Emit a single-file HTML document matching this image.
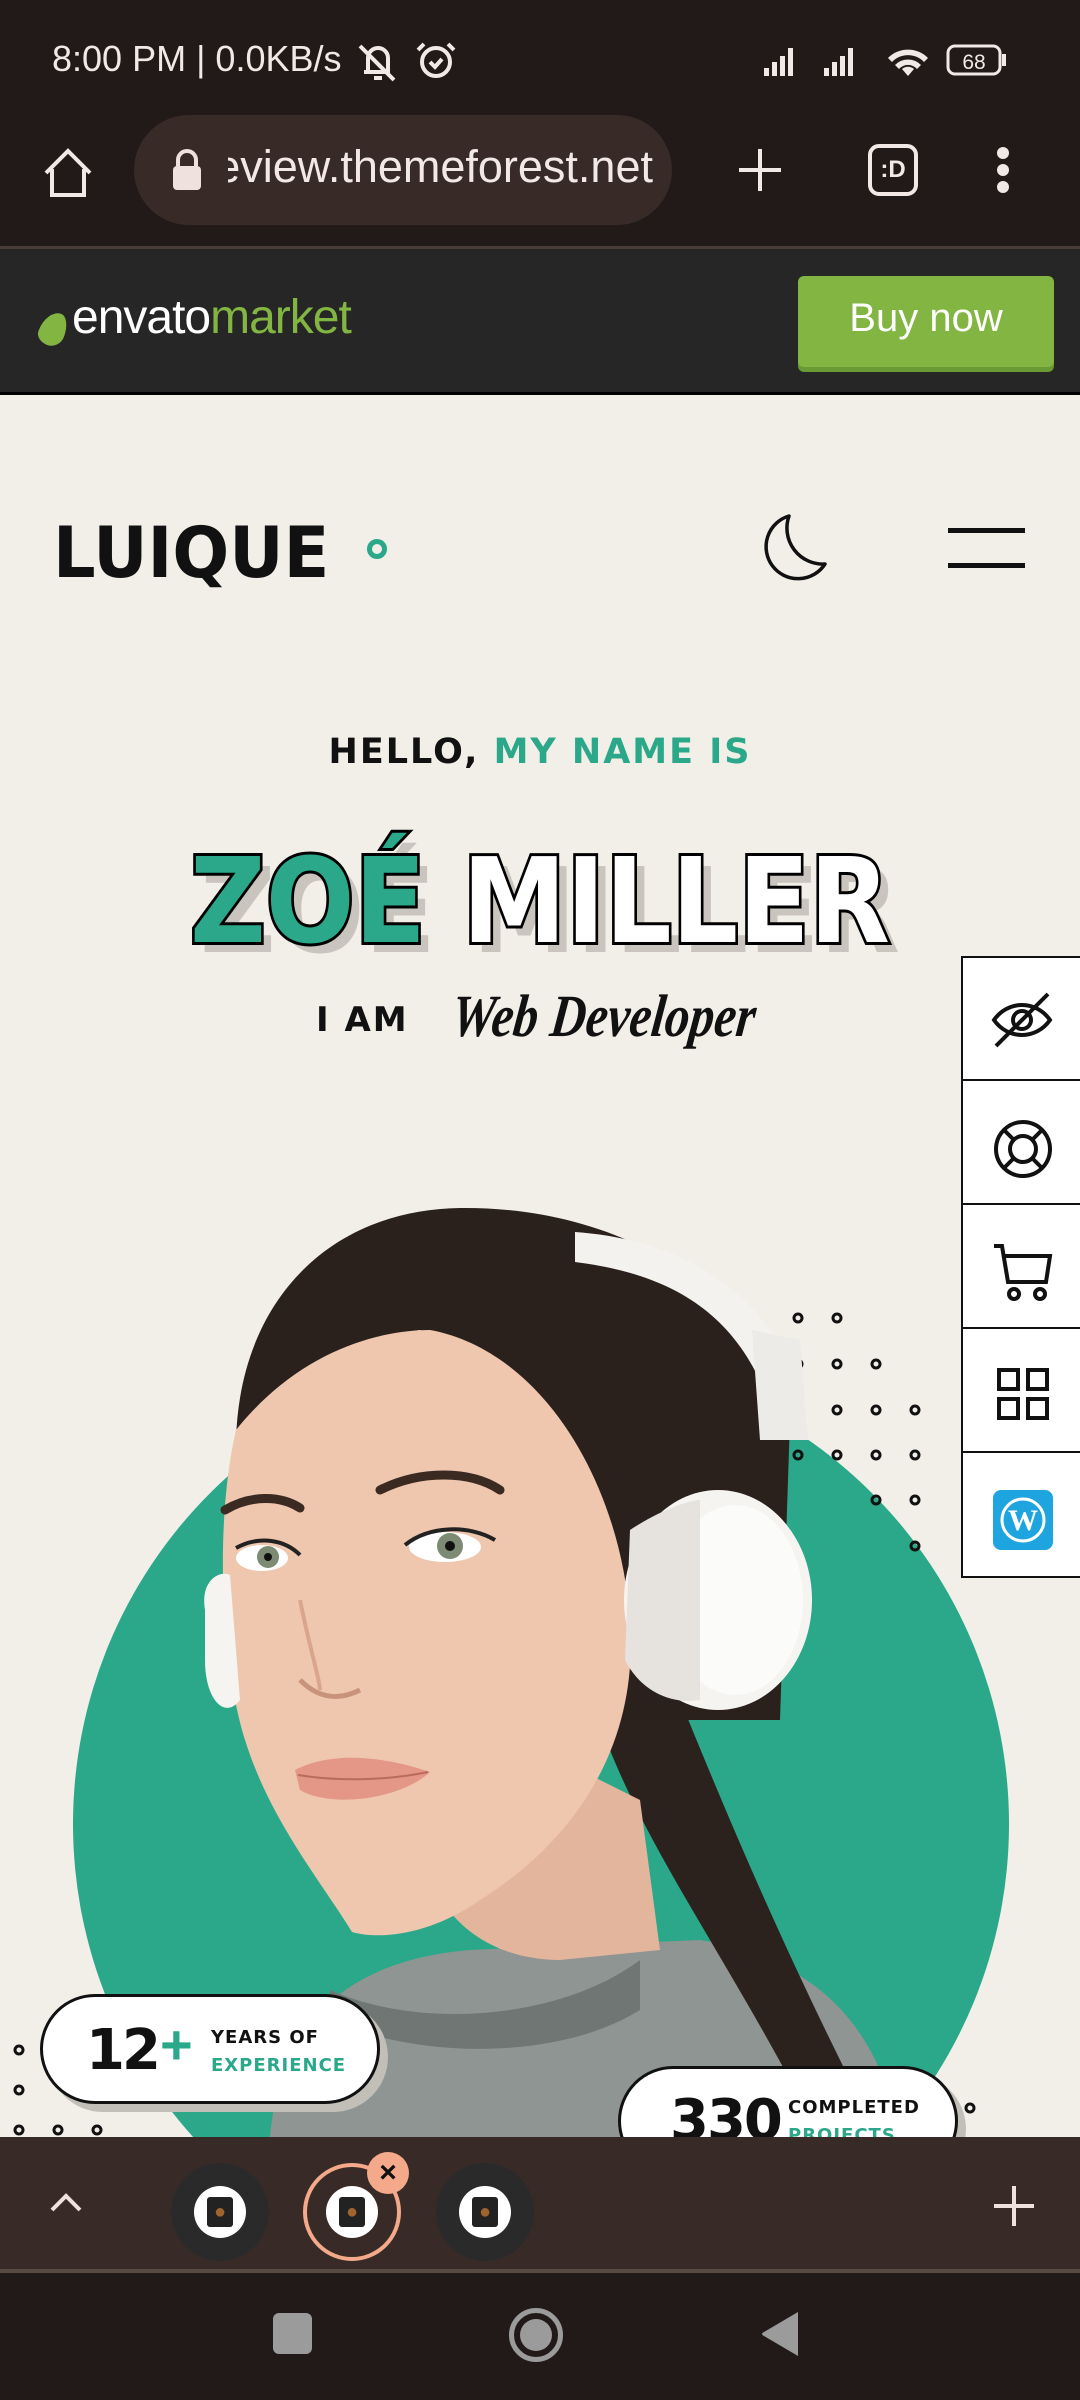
<!DOCTYPE html>
<html><head><meta charset="utf-8"><style>
*{margin:0;padding:0;box-sizing:border-box}
body{width:1080px;height:2400px;overflow:hidden;background:#f2eee8;font-family:"Liberation Sans",sans-serif;position:relative}
.abs{position:absolute}
</style></head><body>
<!-- status + browser bar -->
<div class="abs" style="left:0;top:0;width:1080px;height:248px;background:#221a19"></div>
<div class="abs" style="left:52px;top:38px;color:#f2e9e6;font-size:36px;font-family:'Liberation Sans Narrow','Liberation Sans',sans-serif">8:00 PM | 0.0KB/s</div>
<svg class="abs" style="left:350px;top:38px" width="110" height="46" viewBox="0 0 110 46" fill="none" stroke="#f2e9e6" stroke-width="4">
<path d="M18 34 V20 a10 10 0 0 1 20 0 V34 H14 M24 40 h8 M10 8 L44 42"/><circle cx="86" cy="24" r="14"/><path d="M80 24 l5 5 l7-8 M74 6 l-6 6 M98 6 l6 6"/></svg>
<svg class="abs" style="left:760px;top:40px" width="260" height="40" viewBox="0 0 260 40" fill="#f2e9e6">
<rect x="4" y="28" width="5" height="8"/><rect x="12" y="22" width="5" height="14"/><rect x="20" y="16" width="5" height="20"/><rect x="28" y="8" width="5" height="28"/>
<rect x="64" y="28" width="5" height="8"/><rect x="72" y="22" width="5" height="14"/><rect x="80" y="16" width="5" height="20"/><rect x="88" y="8" width="5" height="28"/>
<path d="M148 36 l-6-7 a9 9 0 0 1 12 0z M128 18 a28 28 0 0 1 40 0 l-4 4 a22 22 0 0 0 -32 0z M135 25 a18 18 0 0 1 26 0 l-4 4 a12 12 0 0 0 -18 0z"/>
<rect x="188" y="6" width="52" height="28" rx="7" fill="none" stroke="#f2e9e6" stroke-width="3"/><rect x="242" y="14" width="4" height="12"/>
<text x="214" y="29" font-size="21" text-anchor="middle" font-family="Liberation Sans">68</text></svg>
<svg class="abs" style="left:40px;top:145px" width="56" height="56" viewBox="0 0 56 56" fill="none" stroke="#f2e9e6" stroke-width="4"><path d="M6 28 L28 6 L50 28 M12 24 V50 H44 V24"/></svg>
<div class="abs" style="left:134px;top:115px;width:538px;height:110px;border-radius:55px;background:#382a27"></div>
<svg class="abs" style="left:170px;top:148px" width="34" height="44" viewBox="0 0 34 44"><path d="M8 18 V12 a9 9 0 0 1 18 0 V18" fill="none" stroke="#efe1dd" stroke-width="4"/><rect x="3" y="18" width="28" height="24" rx="4" fill="#efe1dd"/></svg>
<div class="abs" style="left:228px;top:141px;width:425px;overflow:hidden;white-space:nowrap;display:flex;justify-content:flex-end;color:#f2e9e6;font-size:45px;font-family:'Liberation Sans Narrow','Liberation Sans',sans-serif"><span style="flex:none">review.themeforest.net</span></div>
<svg class="abs" style="left:735px;top:145px" width="50" height="50" viewBox="0 0 50 50" stroke="#f2e9e6" stroke-width="4"><path d="M25 4 V46 M4 25 H46"/></svg>
<div class="abs" style="left:868px;top:144px;width:50px;height:52px;border:4px solid #f2e9e6;border-radius:11px;color:#f2e9e6;font-size:24px;font-weight:bold;text-align:center;line-height:44px">:D</div>
<div class="abs" style="left:997px;top:147px;width:12px;height:12px;border-radius:6px;background:#f2e9e6;box-shadow:0 17px 0 #f2e9e6,0 34px 0 #f2e9e6"></div>
<div class="abs" style="left:0;top:246px;width:1080px;height:3px;background:#4a3d39"></div>
<!-- envato -->
<div class="abs" style="left:0;top:249px;width:1080px;height:146px;background:#262626;border-bottom:3px solid #000"></div>
<div class="abs" style="left:40px;top:312px;width:26px;height:34px;background:#82b541;border-radius:60% 40% 50% 50%/70% 60% 40% 30%;transform:rotate(20deg)"></div>
<div class="abs" style="left:72px;top:290px;font-size:48px;color:#fff;letter-spacing:-1px">envato<span style="color:#82b541;font-weight:300">market</span></div>
<div class="abs" style="left:798px;top:276px;width:256px;height:91px;border-radius:6px;background:#82b541;box-shadow:0 5px 0 #6a9a33;color:#fff;font-size:40px;text-align:center;line-height:84px;font-family:'Liberation Sans Narrow','Liberation Sans',sans-serif">Buy now</div>
<!-- header -->
<div class="abs" style="left:53px;top:508px;font-size:76px;font-weight:900;color:#111;letter-spacing:0px;font-family:'DejaVu Sans','Liberation Sans',sans-serif;transform:scale(0.88,0.93);transform-origin:left center">LUIQUE</div>
<div class="abs" style="left:367px;top:539px;width:20px;height:20px;border-radius:50%;border:5px solid #2aa889"></div>
<svg class="abs" style="left:755px;top:512px" width="75" height="72" viewBox="0 0 75 72"><path d="M34 4 A32 32 0 1 0 70 52 A36 36 0 0 1 34 4z" fill="none" stroke="#111" stroke-width="3.5" stroke-linejoin="round"/></svg>
<div class="abs" style="left:948px;top:528px;width:77px;height:5px;background:#111"></div>
<div class="abs" style="left:948px;top:563px;width:77px;height:5px;background:#111"></div>
<!-- hero text -->
<div class="abs" style="left:0;top:732px;width:1080px;text-align:center;font-size:35px;font-weight:bold;letter-spacing:2px;color:#111;font-family:'DejaVu Sans','Liberation Sans',sans-serif">HELLO, <span style="color:#2aa889">MY NAME IS</span></div>
<svg class="abs" style="left:0;top:820px" width="1080" height="150">
<g font-family="DejaVu Sans,Liberation Sans,sans-serif" font-weight="900" font-size="118" text-anchor="middle">
<text x="550" y="132" fill="#c9c4bd" textLength="700" lengthAdjust="spacingAndGlyphs">ZOÉ MILLER</text>
<text x="540" y="122" fill="#2aa889" stroke="#000" stroke-width="6" paint-order="stroke" textLength="700" lengthAdjust="spacingAndGlyphs"><tspan>ZOÉ</tspan><tspan fill="#fff"> MILLER</tspan></text>
</g></svg>
<div class="abs" style="left:316px;top:1000px;font-size:34px;font-weight:bold;letter-spacing:2px;color:#111;font-family:'DejaVu Sans',sans-serif">I AM</div>
<div class="abs" style="left:452px;top:982px;font-size:60px;font-style:italic;font-weight:bold;color:#111;font-family:'Liberation Serif',serif;transform:scaleX(0.82) skewX(-8deg);transform-origin:left center;white-space:nowrap">Web Developer</div>
<!-- circle + dots -->
<div class="abs" style="left:73px;top:1356px;width:936px;height:936px;border-radius:50%;background:#2aa889"></div>
<svg class="abs" style="left:0;top:1300px" width="1080" height="840" fill="none" stroke="#111" stroke-width="3">
<g><circle cx="798" cy="18" r="4"/><circle cx="837" cy="18" r="4"/><circle cx="798" cy="64" r="4"/><circle cx="837" cy="64" r="4"/><circle cx="876" cy="64" r="4"/><circle cx="798" cy="110" r="4"/><circle cx="837" cy="110" r="4"/><circle cx="876" cy="110" r="4"/><circle cx="915" cy="110" r="4"/><circle cx="798" cy="155" r="4"/><circle cx="837" cy="155" r="4"/><circle cx="876" cy="155" r="4"/><circle cx="915" cy="155" r="4"/><circle cx="876" cy="200" r="4"/><circle cx="915" cy="200" r="4"/><circle cx="915" cy="246" r="4"/></g>
<circle cx="19" cy="750" r="4"/><circle cx="19" cy="790" r="4"/><circle cx="19" cy="830" r="4"/><circle cx="58" cy="830" r="4"/><circle cx="97" cy="830" r="4"/><circle cx="970" cy="808" r="4"/>
</svg>
<!-- portrait -->
<svg class="abs" style="left:0;top:1180px" width="1080" height="957" viewBox="0 1180 1080 957">
<path d="M270 2137 C280 2020 350 1960 470 1950 L700 1940 C820 1960 880 2030 900 2137z" fill="#8f9593"/>
<path d="M330 1990 C420 2030 560 2020 640 1960 L640 2010 C560 2060 420 2060 330 2020z" fill="#6f7674"/>
<path d="M640 1600 C700 1750 760 1900 850 2080 L790 2080 C720 1950 650 1850 610 1750z" fill="#2c221d"/>
<path d="M420 1850 C440 1930 500 1960 560 1960 L660 1950 L640 1800 L560 1760z" fill="#e4b59d"/>
<path d="M236 1440 C240 1300 330 1210 460 1208 C620 1206 760 1290 790 1420 L780 1720 L620 1720 C600 1500 520 1360 420 1330 C340 1340 260 1400 236 1440z" fill="#2b211c"/>
<path d="M236 1430 C300 1350 380 1330 430 1330 C540 1350 620 1480 630 1620 C640 1760 560 1850 480 1900 C430 1935 380 1940 352 1932 C320 1880 270 1820 245 1740 C220 1660 215 1520 236 1430z" fill="#efc6ae"/>
<path d="M300 1680 C320 1700 340 1700 360 1690" stroke="#c8937b" stroke-width="5" fill="none"/>
<path d="M300 1600 C310 1650 320 1680 320 1690" stroke="#d9a68d" stroke-width="4" fill="none"/>
<path d="M225 1510 C250 1495 280 1495 300 1508 M380 1490 C420 1470 470 1470 500 1490" stroke="#3a2a22" stroke-width="9" fill="none" stroke-linecap="round"/>
<ellipse cx="262" cy="1558" rx="26" ry="13" fill="#fff"/><circle cx="268" cy="1557" r="11" fill="#7d8a74"/><circle cx="268" cy="1557" r="4" fill="#111"/>
<ellipse cx="445" cy="1547" rx="36" ry="15" fill="#fff"/><circle cx="450" cy="1546" r="13" fill="#7d8a74"/><circle cx="450" cy="1546" r="5" fill="#111"/>
<path d="M236 1548 C260 1535 285 1540 300 1555 M405 1545 C430 1525 470 1525 495 1540" stroke="#222" stroke-width="4" fill="none"/>
<path d="M295 1770 C330 1752 380 1755 430 1772 C400 1800 330 1808 300 1790z" fill="#e49786"/>
<path d="M298 1775 C340 1782 390 1780 428 1772" stroke="#b86c5d" stroke-width="2" fill="none"/>
<path d="M575 1232 C690 1240 780 1300 805 1410 L775 1420 C745 1320 680 1275 575 1262z" fill="#f4f2ef"/>
<path d="M752 1330 L800 1340 L808 1440 L760 1440z" fill="#ecebe7"/>
<ellipse cx="718" cy="1600" rx="94" ry="110" fill="#f5f4f1"/>
<ellipse cx="735" cy="1600" rx="68" ry="95" fill="#fbfbf9"/>
<path d="M630 1530 C660 1510 690 1500 700 1500 L700 1700 C670 1705 640 1690 625 1660z" fill="#e6e3de"/>
<path d="M205 1610 C200 1580 220 1570 230 1575 L240 1700 C225 1720 205 1700 205 1660z" fill="#f5f4f1"/>
</svg>
<!-- side panel -->
<div class="abs" style="left:961px;top:956px;width:119px;height:622px;background:#fff;border:2px solid #111;border-right:none"></div>
<div class="abs" style="left:961px;top:1079px;width:119px;height:2px;background:#111;box-shadow:0 124px 0 #111,0 248px 0 #111,0 372px 0 #111"></div>
<svg class="abs" style="left:990px;top:990px" width="64" height="60" viewBox="0 0 64 60" fill="none" stroke="#111" stroke-width="4"><path d="M4 30 C18 10 46 10 60 30 C46 50 18 50 4 30z"/><circle cx="32" cy="30" r="9"/><path d="M6 56 L58 4"/></svg>
<svg class="abs" style="left:992px;top:1118px" width="62" height="62" viewBox="0 0 62 62" fill="none" stroke="#111" stroke-width="4"><circle cx="31" cy="31" r="27"/><circle cx="31" cy="31" r="13"/><path d="M12 12 L22 22 M50 12 L40 22 M12 50 L22 40 M50 50 L40 40"/></svg>
<svg class="abs" style="left:992px;top:1242px" width="62" height="60" viewBox="0 0 62 60" fill="none" stroke="#111" stroke-width="4"><path d="M2 4 H10 L16 40 H54 L58 14 H12"/><circle cx="22" cy="52" r="5"/><circle cx="48" cy="52" r="5"/></svg>
<svg class="abs" style="left:996px;top:1367px" width="54" height="54" viewBox="0 0 54 54" fill="none" stroke="#111" stroke-width="4"><rect x="3" y="3" width="19" height="19"/><rect x="32" y="3" width="19" height="19"/><rect x="3" y="32" width="19" height="19"/><rect x="32" y="32" width="19" height="19"/></svg>
<div class="abs" style="left:993px;top:1490px;width:60px;height:60px;border-radius:8px;background:#1ea4de"></div>
<svg class="abs" style="left:998px;top:1495px" width="50" height="50" viewBox="0 0 50 50"><circle cx="25" cy="25" r="21" fill="none" stroke="#fff" stroke-width="3"/><text x="25" y="35" fill="#fff" font-family="Liberation Serif" font-weight="bold" font-size="30" text-anchor="middle">W</text></svg>
<!-- stat cards -->
<div class="abs" style="left:48px;top:2002px;width:340px;height:110px;border-radius:55px;background:#c2beb8"></div>
<div class="abs" style="left:40px;top:1994px;width:340px;height:110px;border-radius:55px;background:#fff;border:3px solid #111"></div>
<div class="abs" style="left:86px;top:2018px;font-size:56px;font-weight:bold;color:#111;font-family:'DejaVu Sans',sans-serif;letter-spacing:-3px">12</div>
<div class="abs" style="left:160px;top:2012px;font-size:56px;font-weight:bold;color:#2aa889">+</div>
<div class="abs" style="left:211px;top:2024px;font-size:18px;font-weight:bold;color:#111;letter-spacing:1px;font-family:'DejaVu Sans',sans-serif;line-height:28px">YEARS OF<br><span style="color:#2aa889">EXPERIENCE</span></div>
<div class="abs" style="left:626px;top:2074px;width:340px;height:110px;border-radius:55px;background:#c2beb8"></div>
<div class="abs" style="left:618px;top:2066px;width:340px;height:110px;border-radius:55px;background:#fff;border:3px solid #111"></div>
<div class="abs" style="left:670px;top:2088px;font-size:56px;font-weight:bold;color:#111;font-family:'DejaVu Sans',sans-serif;letter-spacing:-2px">330</div>
<div class="abs" style="left:788px;top:2094px;font-size:18px;font-weight:bold;color:#111;letter-spacing:1px;font-family:'DejaVu Sans',sans-serif;line-height:28px">COMPLETED<br><span style="color:#2aa889">PROJECTS</span></div>
<!-- tab bar -->
<div class="abs" style="left:0;top:2137px;width:1080px;height:136px;background:#382a26;border-bottom:4px solid #5a4a44"></div>
<svg class="abs" style="left:48px;top:2190px" width="36" height="24" viewBox="0 0 36 24" fill="none" stroke="#efe1dd" stroke-width="4"><path d="M4 20 L18 6 L32 20"/></svg>
<div class="abs" style="left:171px;top:2163px;width:98px;height:98px;border-radius:50%;background:#2b2a2a"></div>
<div class="abs" style="left:194px;top:2186px;width:52px;height:52px;border-radius:50%;background:#fff"></div>
<div class="abs" style="left:207px;top:2197px;width:26px;height:30px;background:#222;border-radius:3px;color:#a0642e;font-size:20px;text-align:center;line-height:30px">&#9679;</div>
<div class="abs" style="left:303px;top:2163px;width:98px;height:98px;border-radius:50%;border:4px solid #f4a98a"></div>
<div class="abs" style="left:326px;top:2186px;width:52px;height:52px;border-radius:50%;background:#fff"></div>
<div class="abs" style="left:339px;top:2197px;width:26px;height:30px;background:#222;border-radius:3px;color:#a0642e;font-size:20px;text-align:center;line-height:30px">&#9679;</div>
<div class="abs" style="left:367px;top:2152px;width:42px;height:42px;border-radius:50%;background:#f4a98a;color:#111;font-size:30px;font-weight:bold;text-align:center;line-height:42px">×</div>
<div class="abs" style="left:436px;top:2163px;width:98px;height:98px;border-radius:50%;background:#2b2a2a"></div>
<div class="abs" style="left:459px;top:2186px;width:52px;height:52px;border-radius:50%;background:#fff"></div>
<div class="abs" style="left:472px;top:2197px;width:26px;height:30px;background:#222;border-radius:3px;color:#a0642e;font-size:20px;text-align:center;line-height:30px">&#9679;</div>
<svg class="abs" style="left:992px;top:2184px" width="44" height="44" viewBox="0 0 44 44" stroke="#efe1dd" stroke-width="4"><path d="M22 2 V42 M2 22 H42"/></svg>
<!-- nav bar -->
<div class="abs" style="left:0;top:2273px;width:1080px;height:127px;background:#221a19"></div>
<div class="abs" style="left:273px;top:2313px;width:39px;height:41px;border-radius:6px;background:#9b9b9b"></div>
<div class="abs" style="left:509px;top:2308px;width:54px;height:54px;border-radius:50%;border:5px solid #9b9b9b"></div>
<div class="abs" style="left:520px;top:2319px;width:32px;height:32px;border-radius:50%;background:#9b9b9b"></div>
<svg class="abs" style="left:760px;top:2310px" width="40" height="48" viewBox="0 0 40 48"><path d="M38 2 V46 L4 26 Q0 24 4 22z" fill="#9b9b9b"/></svg>
</body></html>
